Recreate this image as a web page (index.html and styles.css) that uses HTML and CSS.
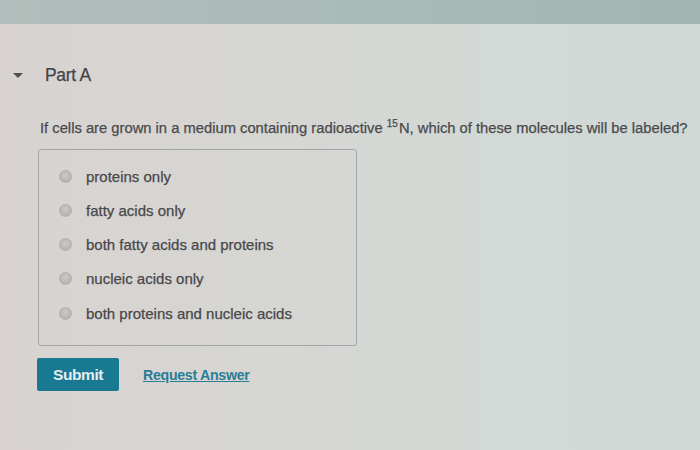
FILE: index.html
```html
<!DOCTYPE html>
<html lang="en">
<head>
<meta charset="utf-8">
<title>Part A</title>
<link rel="stylesheet" href="styles.css">
</head>
<body>
<div class="topbar"></div>
<main class="part">
  <header class="part-head">
    <span class="caret"></span>
    <h2 class="part-title">Part A</h2>
  </header>
  <p class="question">If cells are grown in a medium containing radioactive <sup>15</sup>N, which of these molecules will be labeled?</p>
  <div class="choices">
    <label class="choice"><span class="radio"></span><span>proteins only</span></label>
    <label class="choice"><span class="radio"></span><span>fatty acids only</span></label>
    <label class="choice"><span class="radio"></span><span>both fatty acids and proteins</span></label>
    <label class="choice"><span class="radio"></span><span>nucleic acids only</span></label>
    <label class="choice"><span class="radio"></span><span>both proteins and nucleic acids</span></label>
  </div>
  <div class="actions">
    <button class="submit">Submit</button>
    <a class="request" href="#">Request Answer</a>
  </div>
</main>
</body>
</html>
```
FILE: styles.css
```css
html, body {
  margin: 0;
  height: 100%;
}

body {
  font-family: "Liberation Sans", Arial, sans-serif;
  color: #4b4b4d;
  background: linear-gradient(90deg, #d8d3d1 0%, #d6d6d3 40%, #d2d9d6 75%, #d0d8d5 100%);
  overflow: hidden;
  -webkit-text-stroke: 0.25px currentColor;
}

.topbar {
  height: 24px;
  background: linear-gradient(90deg, #b3bdbb 0%, #a9bbb8 50%, #a2b5b2 100%);
}

.part {
  padding: 40px 0 0 13px;
}

.part-head {
  display: flex;
  align-items: center;
  height: 22px;
}

.caret {
  width: 0;
  height: 0;
  border-left: 5px solid transparent;
  border-right: 5px solid transparent;
  border-top: 5px solid #4f5052;
  margin-right: 22px;
}

.part-title {
  margin: 0;
  font-size: 17.5px;
  font-weight: normal;
  color: #444446;
  letter-spacing: -0.3px;
}

.question {
  margin: 34px 0 0 27px;
  font-size: 14.75px;
  color: #4a4a4c;
  white-space: nowrap;
}

.question sup {
  font-size: 10px;
  vertical-align: 0;
  position: relative;
  top: -6px;
  margin-right: 1px;
}

.choices {
  width: 319px;
  height: 197px;
  margin: 13px 0 0 25px;
  border: 1px solid #a2a6a5;
  border-radius: 3px;
  box-sizing: border-box;
  padding: 16px 0 0 20px;
  display: flex;
  flex-direction: column;
  gap: 14.3px;
}

.choice {
  display: flex;
  align-items: center;
  height: 20px;
  font-size: 15px;
  color: #48484a;
}

.radio {
  width: 13px;
  height: 13px;
  border-radius: 50%;
  box-sizing: border-box;
  border: 1px solid #b0b2b1;
  background: radial-gradient(circle at 50% 40%, #c9cac9 0%, #b4b5b4 70%, #a5a7a6 100%);
  margin-right: 14px;
  -webkit-text-stroke: 0;
}

.actions {
  display: flex;
  align-items: center;
  margin: 12px 0 0 24px;
}

.submit {
  width: 82px;
  height: 33px;
  border: none;
  border-radius: 2px;
  background: #197892;
  color: #e4eef0;
  font-family: inherit;
  font-size: 15.5px;
  font-weight: bold;
  letter-spacing: -0.4px;
  padding: 0;
  -webkit-text-stroke: 0;
}

.request {
  margin-left: 24px;
  font-size: 14.2px;
  font-weight: bold;
  color: #2b7d96;
  letter-spacing: -0.3px;
  text-decoration: underline;
  -webkit-text-stroke: 0;
}
```
